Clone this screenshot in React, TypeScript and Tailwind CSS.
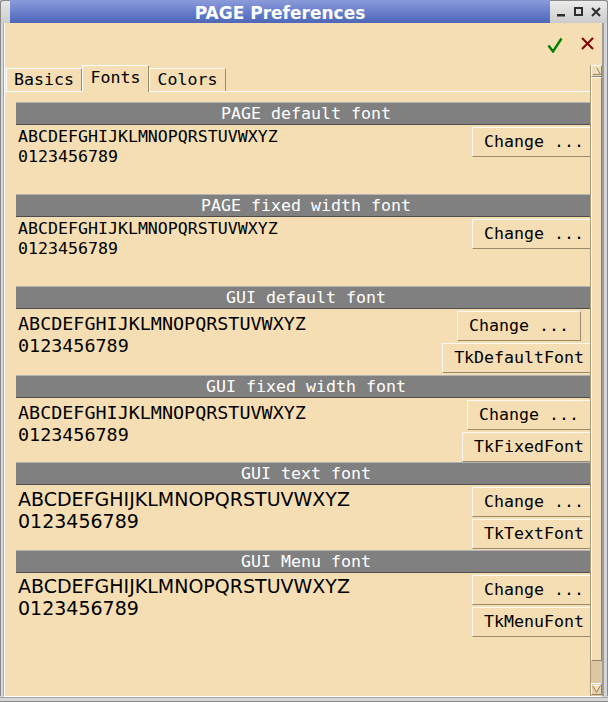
import React from 'react';

const mono = "font-['DejaVu_Sans_Mono',monospace]";

const sections = [
  {
    title: 'PAGE default font',
    sample: "font-['DejaVu_Sans_Mono',monospace] text-[16.6px] leading-[20px] mt-[2px]",
    buttons: ['Change ...'],
    height: 'h-[92px]',
  },
  {
    title: 'PAGE fixed width font',
    sample: "font-['DejaVu_Sans_Mono',monospace] text-[16.6px] leading-[20px] mt-[2px]",
    buttons: ['Change ...'],
    height: 'h-[92px]',
  },
  {
    title: 'GUI default font',
    sample: "font-['DejaVu_Sans_Mono',monospace] text-[18.4px] leading-[21.5px] mt-[4px]",
    buttons: ['Change ...', 'TkDefaultFont'],
    height: 'h-[89px]',
  },
  {
    title: 'GUI fixed width font',
    sample: "font-['DejaVu_Sans_Mono',monospace] text-[18.4px] leading-[21.5px] mt-[4px]",
    buttons: ['Change ...', 'TkFixedFont'],
    height: 'h-[87px]',
  },
  {
    title: 'GUI text font',
    sample: "font-['DejaVu_Sans',sans-serif] text-[19px] leading-[22px] mt-[3px]",
    buttons: ['Change ...', 'TkTextFont'],
    height: 'h-[88px]',
  },
  {
    title: 'GUI Menu font',
    sample: "font-['DejaVu_Sans',sans-serif] text-[19px] leading-[21.5px] mt-[3px]",
    buttons: ['Change ...', 'TkMenuFont'],
    height: 'h-[88px]',
  },
];

function TkButton({ label }: { label: string }) {
  return (
    <div className="h-[30px] px-[11px] flex items-center border-t border-l border-t-[#fffaf0] border-l-[#fffaf0] border-b border-r border-b-[#9a8a6c] border-r-[#9a8a6c] bg-[#f5deb3] text-[16.6px] text-black whitespace-nowrap">
      {label}
    </div>
  );
}

function Section({ s }: { s: (typeof sections)[number] }) {
  return (
    <div className={`${s.height} flex flex-col shrink-0`}>
      <div className="h-[23px] shrink-0 bg-[#808080] border-t border-t-[#b4b4b4] border-b border-b-[#4c4c4c] flex items-center justify-center pt-[2px] text-white text-[16.6px] leading-none whitespace-pre">
        {s.title}
      </div>
      <div className="flex justify-between">
        <div className={`${s.sample} pl-[2px] text-black`}>
          <div>ABCDEFGHIJKLMNOPQRSTUVWXYZ</div>
          <div>0123456789</div>
        </div>
        <div className="flex flex-col items-center gap-[2px] mt-[2px]">
          {s.buttons.map((b) => (
            <TkButton key={b} label={b} />
          ))}
        </div>
      </div>
    </div>
  );
}

function Scrollbar() {
  return (
    <div className="w-[12px] flex flex-col bg-[#dcc7a0] border-l border-l-[#a89878]">
      {/* up arrow */}
      <div className="h-[12px] shrink-0 flex items-center justify-center border-t border-l border-t-white border-l-white border-b border-r border-b-[#8f826d] border-r-[#8f826d] bg-[#f5deb3]">
        <svg width="9" height="8" viewBox="0 0 9 8">
          <path d="M4.5 0.5 L8.5 7.5 L0.5 7.5 Z" fill="#f5deb3" stroke="#8f826d" strokeWidth="1" />
          <path d="M4.5 0.5 L0.5 7.5" stroke="#ffffff" strokeWidth="1" />
        </svg>
      </div>
      {/* thumb */}
      <div className="h-[584px] shrink-0 border-t border-l border-t-white border-l-white border-b border-r border-b-[#8f826d] border-r-[#8f826d] bg-[#f5deb3]" />
      <div className="flex-1" />
      {/* down arrow */}
      <div className="h-[12px] shrink-0 flex items-center justify-center border-t border-l border-t-white border-l-white border-b border-r border-b-[#8f826d] border-r-[#8f826d] bg-[#e8d2a8]">
        <svg width="9" height="8" viewBox="0 0 9 8">
          <path d="M0.5 0.5 L8.5 0.5 L4.5 7.5 Z" fill="#f5deb3" stroke="#8f826d" strokeWidth="1" />
          <path d="M0.5 0.5 L8.5 0.5" stroke="#ffffff" strokeWidth="1" />
        </svg>
      </div>
      <div className="h-[1px] shrink-0" />
    </div>
  );
}

export default function App() {
  return (
    <div className={`w-[608px] h-[702px] flex flex-col bg-[#d4d4d4] overflow-hidden ${mono}`}>
      {/* Title bar */}
      <div className="h-[23px] shrink-0 flex">
        <div className="w-[10px] bg-gradient-to-b from-[#e6e6e6] to-[#cdcdcd] border-l border-t border-l-[#8a8a8a] border-t-[#8a8a8a] rounded-tl-[3px]" />
        <div className="w-[540px] bg-gradient-to-b from-[#8b9bd9] via-[#6a80cc] to-[#4d66b7] flex items-center justify-center pt-[3px]">
          <span className="font-['DejaVu_Sans',sans-serif] font-bold text-[17px] text-white leading-none">
            PAGE Preferences
          </span>
        </div>
        <div className="flex-1 bg-gradient-to-b from-[#ececec] to-[#cccccc] border-t border-r border-t-[#8a8a8a] border-r-[#8a8a8a] rounded-tr-[3px] flex items-center pl-[7px] gap-[8px]">
          <svg width="9" height="10" viewBox="0 0 9 10">
            <rect x="0" y="7" width="8" height="2.5" fill="#2e2e2e" />
          </svg>
          <svg width="9" height="10" viewBox="0 0 9 10">
            <rect x="1" y="1" width="7" height="7" fill="none" stroke="#2e2e2e" strokeWidth="2" />
          </svg>
          <svg width="10" height="10" viewBox="0 0 10 10">
            <path d="M1 1 L9 9 M9 1 L1 9" stroke="#2e2e2e" strokeWidth="2" />
          </svg>
        </div>
      </div>

      <div className="flex-1 flex min-h-0">
        {/* left frame */}
        <div className="w-[5px] flex">
          <div className="w-[1px] bg-[#8a8a8a]" />
          <div className="w-[2px] bg-[#d8d8d8]" />
          <div className="w-[1px] bg-[#a6a6a6]" />
          <div className="w-[1px] bg-white" />
        </div>

        {/* body */}
        <div className="w-[597px] flex flex-col bg-[#f5deb3]">
          {/* ok / cancel */}
          <div className="h-[42px] shrink-0 flex justify-end items-start pt-[14px] pr-[8px] gap-[18px]">
            <svg width="16" height="16" viewBox="0 0 16 16">
              <path d="M1.5 8.5 L6 14.5 L14.5 1.5" fill="none" stroke="#008000" strokeWidth="2.4" />
            </svg>
            <svg width="13" height="13" viewBox="0 0 13 13">
              <path d="M1 1 L12 12 M12 1 L1 12" stroke="#800000" strokeWidth="2" />
            </svg>
          </div>

          <div className="flex-1 flex min-h-0">
            {/* notebook */}
            <div className="w-[585px] flex flex-col min-h-0">
              <div className="h-[27px] shrink-0 flex items-end border-b border-b-white text-[16.6px] text-black">
                <div className="w-[76px] h-[23px] ml-[1px] border-t border-l border-t-white border-l-white border-r border-r-[#9a8a6c] flex items-center justify-center">
                  Basics
                </div>
                <div className="w-[67px] h-[27px] -mb-[1px] bg-[#f5deb3] border-t border-l border-t-white border-l-white border-r border-r-[#9a8a6c] flex items-center justify-center pb-[2px]">
                  Fonts
                </div>
                <div className="w-[77px] h-[23px] border-t border-l border-t-[#fffaf0] border-l-[#fffaf0] border-r border-r-[#9a8a6c] flex items-center justify-center">
                  Colors
                </div>
              </div>
              <div className="flex-1 overflow-hidden pt-[10px] pl-[11px]">
                <div className="w-[580px] flex flex-col">
                  {sections.map((s) => (
                    <Section key={s.title} s={s} />
                  ))}
                </div>
              </div>
            </div>
            <Scrollbar />
          </div>
        </div>

        {/* right frame */}
        <div className="w-[6px] flex">
          <div className="w-[2px] bg-[#9c9c9c]" />
          <div className="w-[3px] bg-[#d6d6d6]" />
          <div className="w-[1px] bg-[#8a8a8a]" />
        </div>
      </div>

      {/* bottom frame */}
      <div className="h-[6px] shrink-0 flex flex-col">
        <div className="h-[1px] bg-white ml-[4px] mr-[6px]" />
        <div className="h-[1px] bg-[#a6a6a6]" />
        <div className="h-[3px] bg-[#d6d6d6]" />
        <div className="h-[1px] bg-[#8a8a8a]" />
      </div>
    </div>
  );
}
